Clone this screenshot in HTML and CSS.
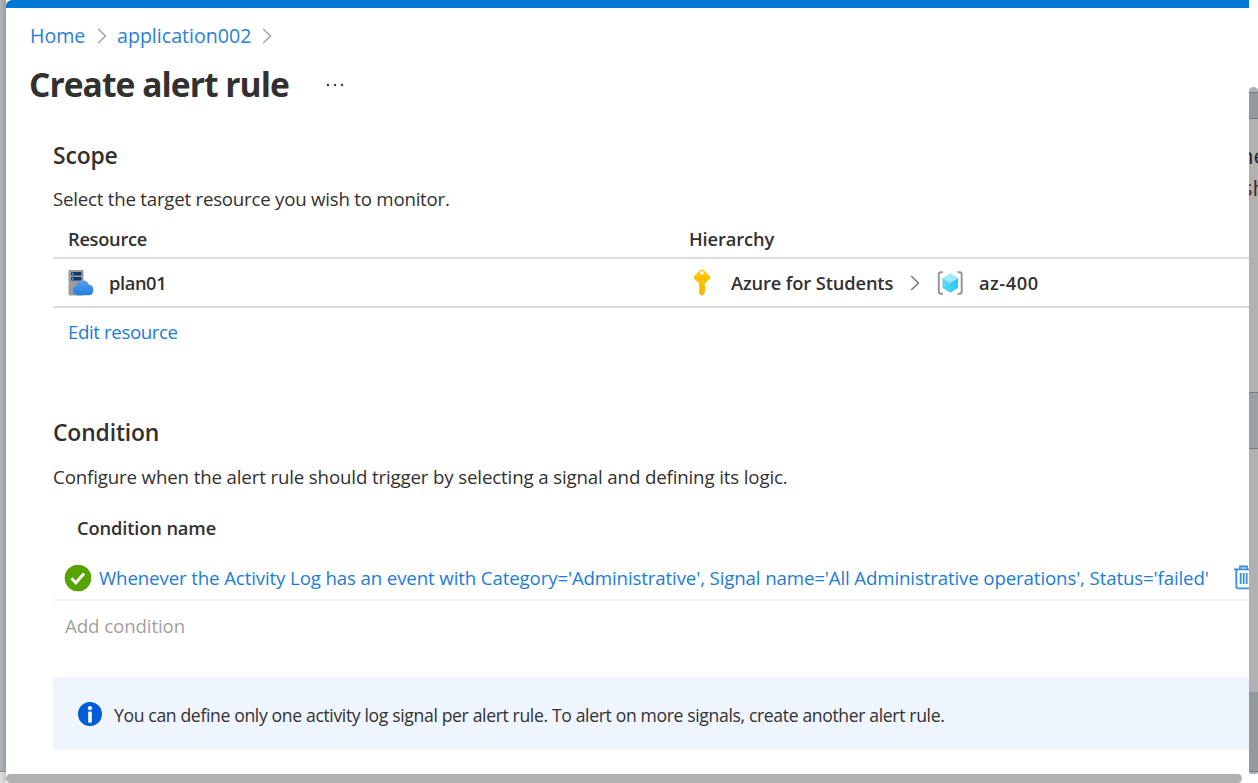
FILE: index.html
```
<!DOCTYPE html>
<html lang="en">
<head>
<meta charset="utf-8">
<title>Create alert rule</title>
<link rel="stylesheet" href="styles.css">
</head>
<body>
<div class="screen">
  <div class="edge-left"><div class="edge-foot"></div></div>
  <main class="window">
    <div class="topbar"></div>
    <nav class="breadcrumb">
      <a class="home">Home</a>
      <svg class="crumb-sep" width="10" height="16" viewBox="0 0 10 16"><path d="M1.2 1 8.5 8 1.2 15"/></svg>
      <a class="app">application002</a>
      <svg class="crumb-sep" width="10" height="16" viewBox="0 0 10 16"><path d="M1.2 1 8.5 8 1.2 15"/></svg>
    </nav>
    <header class="title-row">
      <h1>Create alert rule</h1>
      <svg width="18" height="4" viewBox="0 0 18 4" fill="#444"><circle cx="2" cy="2" r="1.25"/><circle cx="9" cy="2" r="1.25"/><circle cx="16" cy="2" r="1.25"/></svg>
    </header>
    <section class="scope">
      <h2>Scope</h2>
      <p class="lead">Select the target resource you wish to monitor.</p>
      <div class="grid head"><span class="res">Resource</span><span>Hierarchy</span></div>
      <div class="grid row">
        <div class="cell">
          <svg class="plan-icon" width="26" height="26" viewBox="0 0 26 26">
            <defs><linearGradient id="cloud" x1="0" y1="0" x2="0" y2="1"><stop offset="0" stop-color="#559cec"/><stop offset="1" stop-color="#2580dc"/></linearGradient></defs>
            <path d="M1.5 0h13q1 0 1 1v24.5H2q-1.5 0-1.500-1.500V1q0-1 1-1z" fill="#9b9b9b"/>
            <rect x="3" y="2" width="10.500" height="3.500" rx="1" fill="#12366b"/><rect x="3" y="7" width="10.500" height="3.500" rx="1" fill="#12366b"/>
            <circle cx="4.600" cy="3.800" r="1" fill="#35c3ee"/><circle cx="4.600" cy="8.800" r="1" fill="#35c3ee"/>
            <path d="M9.500 25.300a5 5 0 0 1-.6-9.900 6.300 6.300 0 0 1 12-.8A5.400 5.400 0 0 1 20.400 25.300z" fill="url(#cloud)"/>
          </svg>
          <span class="plan">plan01</span>
        </div>
        <div class="cell">
          <svg class="key-icon" width="18" height="27" viewBox="0 0 18 27">
            <defs><linearGradient id="gold" x1="0" y1="0" x2="0" y2="1"><stop offset="0" stop-color="#ffca08"/><stop offset="1" stop-color="#fbb600"/></linearGradient></defs>
            <path d="M7.200 1.200q1.800-1.500 3.600 0l6 5.700q1.200 1.400 0 2.800l-5 5v2.100l1.100 1.200-1.200 1.500 1.200 1.500-1.200 1.500v2.200L9 26.800l-2.800-2.100V14.700l-5-5q-1.200-1.400 0-2.800z" fill="url(#gold)"/>
            <circle cx="9" cy="4" r="1.800" fill="#fff"/><path d="M5 10h8" stroke="#f5ac00"/><path d="M8 15v8.500" stroke="#f7a900" stroke-width=".7"/>
          </svg>
          <span class="students">Azure for Students</span>
          <svg class="row-sep" width="10" height="16" viewBox="0 0 10 16"><path d="M1.200 1 8.500 8 1.200 15"/></svg>
          <svg class="group-icon" width="27" height="24" viewBox="0 0 27 24">
            <g fill="none" stroke="#969696" stroke-width="2"><path d="M6 1.200H4Q1.800 1.200 1.800 3.400v17.200q0 2.200 2.200 2.200h2M20.500 1.200h2q2.200 0 2.200 2.200v17.200q0 2.200-2.200 2.200h-2"/></g>
            <path d="m13.300 2.800 7.700 4.400v9.600l-7.700 4.600-7.800-4.600V7.200z" fill="#5cd5f7"/><path d="m13.300 2.800 7.700 4.400-7.700 5-7.800-5z" fill="#9cebff"/><path d="M21 7.200v9.600l-7.700 4.600v-9.200z" fill="#32c8f0"/><path d="m5.500 16.800 7.800-4.600 7.700 4.600-7.700 4.600z" fill="#35d4f5" opacity=".6"/>
          </svg>
          <span class="az">az-400</span>
        </div>
      </div>
      <a class="edit">Edit resource</a>
    </section>
    <section class="condition">
      <h2>Condition</h2>
      <p class="lead logic">Configure when the alert rule should trigger by selecting a signal and defining its logic.</p>
      <div class="cond-head">Condition name</div>
      <div class="cond-row">
        <svg width="28" height="28" viewBox="0 0 28 28"><circle cx="14" cy="14" r="13.300" fill="#57a300"/><path d="m7.500 14.300 4.300 4.500 8.300-9.300" fill="none" stroke="#fff" stroke-width="3"/></svg>
        <a class="signal">Whenever the Activity Log has an event with Category='Administrative', Signal name='All Administrative operations', Status='failed'</a>
        <svg class="trash" width="20" height="25" viewBox="0 0 20 25"><path d="M0 4.300h20M6 4V1.500h7V4M2.300 4.300v17q0 2 2 2h11q2 0 2-2v-17M6.700 8v11M9.700 8v11M12.700 8v11"/></svg>
      </div>
      <div class="add">Add condition</div>
      <div class="notice">
        <svg width="24" height="24" viewBox="0 0 24 24"><circle cx="12" cy="12" r="12" fill="#015cda"/><circle cx="12" cy="6.200" r="2.100" fill="#fff"/><rect x="10.200" y="9.600" width="3.600" height="11" fill="#fff"/></svg>
        <span>You can define only one activity log signal per alert rule. To alert on more signals, create another alert rule.</span>
      </div>
    </section>
    <div class="hscroll"></div>
  </main>
  <aside class="edge-right">
    <div class="peek-top"></div><div class="cap"></div>
    <div class="band band-a"></div>
    <div class="peek"><span>he</span><span class="second">sh</span></div>
    <div class="band band-b"></div>
    <div class="plain"></div>
    <div class="band-c"></div><div class="cap-end"></div>
  </aside>
</div>
</body>
</html>
```
FILE: styles.css
```
* { box-sizing: border-box; }
body { margin: 0; overflow: hidden; background: #fff; font-family: "Open Sans", "Noto Sans", sans-serif; color: #323130; }
h1, h2, p { margin: 0; font-weight: 600; white-space: nowrap; }
svg { flex: none; display: block; }
.screen { display: grid; grid-template-columns: 6px 1243px 9px; width: 1258px; height: 783px; overflow: hidden; }
.edge-left { display: flex; flex-direction: column; justify-content: flex-end; background: linear-gradient(90deg, #b0b4b7, #999da0); }
.edge-foot { height: 12px; border-top: 1px solid #888; background: linear-gradient(90deg, #e0e0e0, #c4c4c4); }
.window { display: flex; flex-direction: column; height: 783px; background: #fff; overflow: hidden; border-radius: 6px 0 0 0; }
.topbar { height: 8px; background: #0078d7; flex: none; }
.breadcrumb { display: flex; align-items: center; height: 56px; padding-left: 24px; font-size: 19.6px; line-height: 26px; color: #2b80d7; }
.breadcrumb a { margin-top: -1px; }
.crumb-sep, .row-sep { fill: none; stroke: #a3a3a3; stroke-width: 1.5; }
.breadcrumb .home { width: 55px; margin-right: 12px; }
.breadcrumb .app { width: 134px; margin-left: 10px; margin-right: 11px; }
.title-row { display: flex; align-items: center; height: 42px; padding-left: 23px; gap: 39px; }
h1 { width: 258px; font-size: 33.6px; line-height: 42px; letter-spacing: -.96px; font-weight: 700; margin-top: -2px; }
.scope { margin: 31px 0 0 47px; }
h2 { font-size: 22.9px; line-height: 36px; letter-spacing: -.15px; position: relative; top: 1px; }
.lead { font-size: 18.7px; line-height: 36px; margin-top: 8px; font-weight: 400; letter-spacing: -.235px; }
.grid { display: grid; grid-template-columns: 636px 1fr; align-items: center; font-size: 18.3px; letter-spacing: -.13px; font-weight: 600; border-bottom: 2px solid #dcdcdc; }
.head { height: 39px; margin-top: 3px; line-height: 38px; }
.res { padding-left: 15px; letter-spacing: -.3px; }
.row { height: 49px; }
.cell { display: flex; align-items: center; }
.plan-icon { margin-left: 15px; }
.plan { margin-left: 15px; letter-spacing: -.4px; }
.key-icon { margin-left: 4px; }
.students { width: 163px; margin-left: 20px; }
.row-sep { margin-left: 16px; stroke: #777; }
.group-icon { margin-left: 17px; }
.az { margin-left: 15px; letter-spacing: .5px; }
.edit { display: block; height: 36px; margin: 6px 0 0 15px; font-size: 18.7px; line-height: 36px; letter-spacing: -.4px; color: #1c7cd9; }
.condition { margin: 64px 0 0 47px; }
.logic { letter-spacing: -.145px; margin-top: 9px; }
.cond-head { margin: 15px 0 0 24px; font-size: 18.3px; letter-spacing: -.13px; line-height: 36px; font-weight: 600; }
.cond-row { display: flex; align-items: center; height: 45px; margin-top: 10px; padding-left: 11px; border-bottom: 2px solid #f3f3f3; color: #1c7cd9; }
.signal { width: 1111px; margin-left: 7px; font-size: 18.7px; letter-spacing: -.137px; white-space: nowrap; flex: none; }
.trash { margin-left: 24px; fill: none; stroke: #3d8ee0; stroke-width: 1.8; }
.add { margin: 7px 0 0 12px; font-size: 18.7px; letter-spacing: -.1px; line-height: 36px; color: #a19f9d; }
.notice { display: flex; align-items: center; height: 73px; margin-top: 33px; padding-left: 25px; border-radius: 3px 0 0 3px; background: #eff5fe; font-size: 17.6px; letter-spacing: -.36px; white-space: nowrap; }
.notice span { margin: 2px 0 0 12px; }
.hscroll { width: 1236px; height: 9px; margin-top: auto; border-radius: 6px; background: #b1b1b1; flex: none; }
.edge-right { display: flex; flex-direction: column; overflow: hidden; background: #fff; }
.peek-top { height: 87px; }
.cap { height: 5px; border-radius: 5px 5px 0 0; background: #b1b1b1; }
.band { border: solid #777b7e; border-width: 1px 0; background: #94999c; }
.band-a { height: 27px; }
.peek { display: flex; flex-direction: column; height: 273px; padding-top: 20px; background: #b1b1b1; color: #1c2330; font: 22px/32px "Open Sans", sans-serif; overflow: hidden; }
.peek span { margin-left: -9px; }
.peek .second { margin-left: -7px; color: #472b25; }
.band-b { height: 57px; background: #9ba0a3; }
.plain { height: 243px; background: #b1b1b1; }
.band-c { height: 80px; background: #94999c; border-bottom: 1px solid #777b7e; }
.cap-end { height: 2px; border-radius: 0 0 5px 5px; background: #b1b1b1; }
```
